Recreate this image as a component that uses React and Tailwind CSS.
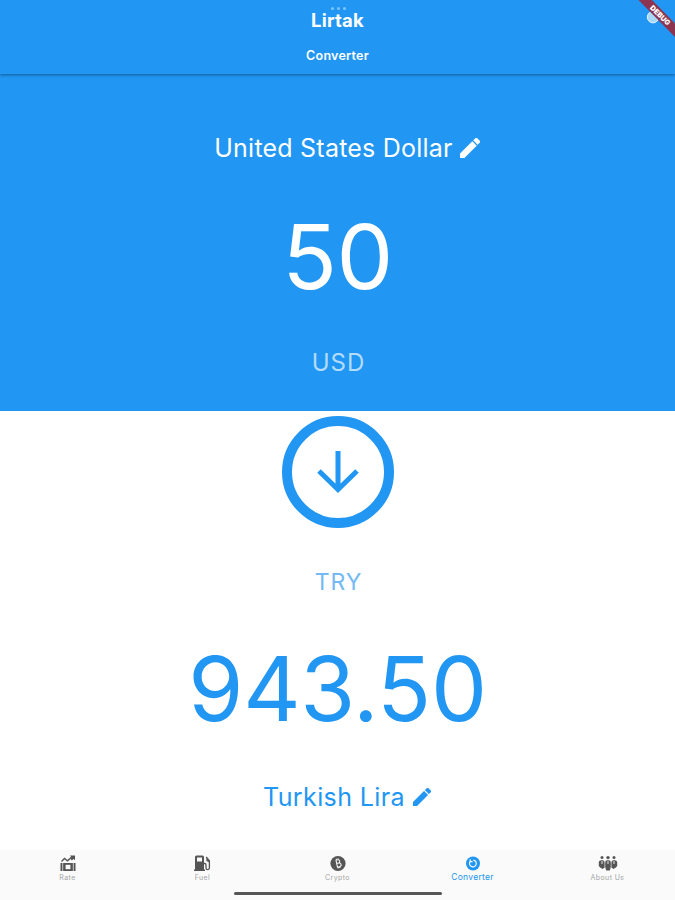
const TABS = [
  { id: 'rate', label: 'Rate' },
  { id: 'fuel', label: 'Fuel' },
  { id: 'crypto', label: 'Crypto' },
  { id: 'converter', label: 'Converter' },
  { id: 'about', label: 'About Us' },
];

function PencilIcon({ className }) {
  return (
    <svg className={className} viewBox="3 3 18 18" fill="currentColor" stroke="currentColor" strokeWidth="0.5">
      <path d="M3 17.25V21h3.75L17.81 9.94l-3.75-3.75L3 17.25zM20.71 7.04a1 1 0 0 0 0-1.41l-2.34-2.34a1 1 0 0 0-1.41 0l-1.83 1.83 3.75 3.75 1.83-1.83z" />
    </svg>
  );
}

function TabIcon({ id }) {
  if (id === 'rate') {
    return (
      <svg className="w-4 h-[17px]" viewBox="0 0 16 17" fill="none" stroke="currentColor">
        <path d="M1.5 6.5l3-3 3 2.3 4.5-4" strokeWidth="1.4" />
        <path d="M10 .5h5v4.8l-1.6-1.4-1.5 1.5-1.4-1.3 1.2-1.4z" fill="currentColor" stroke="none" />
        <path d="M.5 8h15v8H.5z" fill="currentColor" stroke="none" />
        <path d="M2.7 8v8M13.3 8v8" stroke="#fafafa" strokeWidth=".7" />
        <rect x="5.6" y="9.8" width="4.8" height="4.4" fill="#fafafa" stroke="none" />
      </svg>
    );
  }
  if (id === 'fuel') {
    return (
      <svg className="w-[17px] h-[17px]" viewBox="0 0 17 17" fill="none" stroke="currentColor">
        <path d="M1 2q0-1.5 1.5-1.5h6Q10 .5 10 2v12.5h1V16H0v-1.5h1z" fill="currentColor" stroke="none" />
        <path d="M3 2.5h5v4H3z" fill="#fafafa" stroke="none" />
        <path d="M10 8.5h.8q1.2 0 1.2 1.5v3q0 1.7 1.6 1.7T15.4 13V5.8L12.2 2M13 3v2.5l2.2 1.2" strokeWidth="1.3" />
      </svg>
    );
  }
  if (id === 'crypto') {
    return (
      <svg className="w-4 h-[17px]" viewBox="0 0 16 17" fill="none">
        <circle cx="8" cy="8.5" r="7.6" fill="currentColor" />
        <g transform="rotate(-12 8 8.5)">
          <path d="M6.3 4.8h2.2a1.7 1.7 0 0 1 0 3.4H6.6h2.3a1.9 1.9 0 0 1 0 3.8H6.3M6.7 4.8V12M7.3 3.5v1.3M9 3.5v1.3M7.3 12v1.4M9 12v1.4" stroke="#fafafa" strokeWidth="1.05" />
        </g>
      </svg>
    );
  }
  if (id === 'converter') {
    return (
      <svg className="w-4 h-[17px]" viewBox="0 0 16 17" fill="none">
        <circle cx="8" cy="8.5" r="7" fill="currentColor" />
        <path d="M5.6 6a3.4 3.4 0 1 0 2.7-.9M5.2 4.2v2.4h2.4" stroke="#fafafa" strokeWidth="1.2" />
      </svg>
    );
  }
  return (
    <svg className="w-5 h-[17px]" viewBox="0 0 20 17" fill="currentColor">
      <circle cx="4" cy="2.6" r="1.5" />
      <circle cx="10" cy="2.6" r="1.7" />
      <circle cx="16" cy="2.6" r="1.5" />
      <path d="M.8 8q0-2.8 2.3-2.8h1.7Q6.6 5.5 6.6 8v4.5l-2 1.5-2.5-1.5L.8 11zM7.2 8q0-2.8 2-2.8h1.6q2 0 2 2.8v4l-1 3.5H8.2l-1-3.5zM13.4 8q0-2.8 1.8-2.8h1.7q2.3 0 2.3 2.8v3l-1.3 1.5-2.5 1.5-2-1.5z" />
      <path d="M4 6v3M10 6v3M16 6v3" stroke="#fafafa" strokeWidth=".9" />
    </svg>
  );
}

export default function App() {
  return (
    <div className="relative flex flex-col w-full h-[900px] overflow-hidden bg-white font-['Inter',sans-serif] text-[#2196f3]">
      {/* App bar */}
      <header className="relative z-10 h-[74px] shrink-0 flex flex-col items-center bg-[#2196f3] text-white shadow-[0_1px_3px_rgba(0,0,0,0.4)]">
        <h1 className="mt-[10px] text-[18.5px] leading-5 font-bold tracking-[0.2px]">Lirtak</h1>
        <h2 className="mt-4 text-[12.5px] leading-5 font-semibold tracking-[0.25px]">Converter</h2>
        <div className="absolute top-[7px] left-[331px] flex gap-[3px]">
          <span className="w-[3px] h-[3px] rounded-full bg-[#7cc5fb]" />
          <span className="w-[3px] h-[3px] rounded-full bg-[#7cc5fb]" />
          <span className="w-[3px] h-[3px] rounded-full bg-[#7cc5fb]" />
        </div>
      </header>

      {/* Source currency */}
      <section className="h-[337px] shrink-0 flex flex-col items-center bg-[#2196f3] text-white">
        <div className="mt-[58px] ml-[19px] flex items-center gap-[7px]">
          <span className="text-[25px] leading-8 tracking-[0.22px]">United States Dollar</span>
          <PencilIcon className="w-5 h-5" />
        </div>
        <div className="mt-[43px] text-[90px] leading-[100px] tracking-[-0.5px]">50</div>
        <div className="mt-[40px] ml-[2px] text-[24px] leading-8 tracking-[1px] text-[#b3dcfb]">USD</div>
      </section>

      {/* Target currency */}
      <section className="flex-1 flex flex-col items-center">
        <div className="mt-[5px] w-[112px] h-[112px] shrink-0 rounded-full border-[10px] border-[#2196f3] flex items-center justify-center">
          <svg className="w-[42px] h-[42px]" viewBox="0 0 42 42" fill="none" stroke="currentColor" strokeWidth="5">
            <path d="M21 0v38M2 20l19 18.5L40 20" />
          </svg>
        </div>
        <div className="mt-[38px] ml-[2px] text-[23px] leading-8 tracking-[1px] text-[#73b9f5]">TRY</div>
        <div className="mt-[41px] text-[89px] leading-[100px] tracking-[-0.3px]">943.50</div>
        <div className="mt-[42px] ml-[19px] flex items-center gap-[8px]">
          <span className="text-[25px] leading-8 tracking-[0.4px]">Turkish Lira</span>
          <PencilIcon className="w-[18px] h-[18px]" />
        </div>
      </section>

      {/* Bottom tabs */}
      <nav className="relative h-[50px] shrink-0 grid grid-cols-5 bg-[#fafafa]">
        {TABS.map(tab => (
          <button
            key={tab.id}
            className={`flex flex-col items-center pt-[5px] ${
              tab.id === 'converter' ? 'text-[#2196f3]' : 'text-[#555555]'
            }`}
          >
            <TabIcon id={tab.id} />
            <span
              className={
                tab.id === 'converter'
                  ? 'text-[8.5px] leading-[10px] tracking-[0.3px]'
                  : 'text-[7px] leading-[11px] tracking-[0.4px] text-[#a5a5a5]'
              }
            >
              {tab.label}
            </span>
          </button>
        ))}
        <div className="absolute bottom-[5px] left-[234px] w-[208px] h-[3px] rounded-full bg-[#555555]" />
      </nav>

      {/* Theme toggle and debug ribbon */}
      <svg className="absolute top-0 right-0 z-20 w-[60px] h-[50px]" viewBox="0 0 60 50">
        <circle cx="38" cy="17.2" r="5.7" fill="#a9d8fb" stroke="#e3f3fe" />
        <path d="M23.5 0H37L60 23.5V37z" fill="#8d3450" />
        <text transform="translate(45.3 15.2) rotate(45)" y="2.6" textAnchor="middle" fontSize="7.2" fontWeight="900" fill="#fff">
          DEBUG
        </text>
      </svg>
    </div>
  );
}
